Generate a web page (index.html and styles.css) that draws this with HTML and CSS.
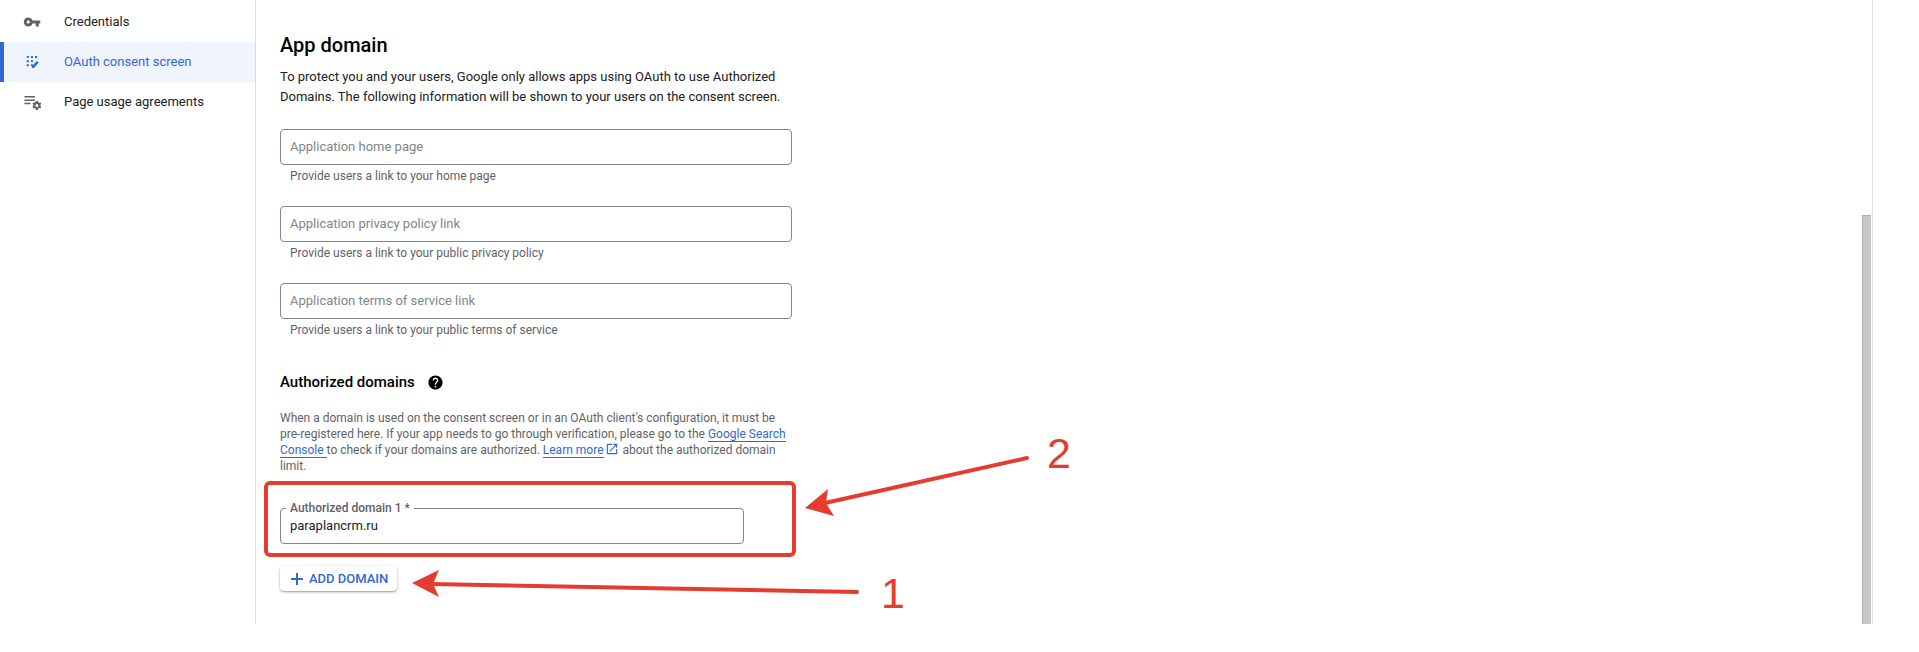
FILE: index.html
```html
<!DOCTYPE html>
<html lang="en">
<head>
    <meta charset="UTF-8">
    <title>OAuth consent screen</title>
    <link rel="stylesheet" href="styles.css">
</head>
<body>
    <div class="page">
        <nav class="sidebar">
            <a class="nav-item">
                <svg class="nav-icon" viewBox="0 0 24 24"><path d="M12.65 10C11.83 7.67 9.61 6 7 6c-3.31 0-6 2.69-6 6s2.69 6 6 6c2.61 0 4.83-1.67 5.65-4H17v4h4v-4h2v-4H12.65zM7 14c-1.1 0-2-.9-2-2s.9-2 2-2 2 .9 2 2-.9 2-2 2z"/></svg>
                Credentials
            </a>
            <a class="nav-item active">
                <svg class="nav-icon" viewBox="0 0 24 24"><path d="M5 4h2.800v2.800H5zM10.500 4h2.800v2.800h-2.800zM16 4h2.800v2.800H16zM5 9.500h2.800v2.800H5zM10.500 9.500h2.800v2.800h-2.800zM5 15h2.800v2.800H5zM10.500 15h2.800v2.800h-2.800zM12 20v-2.500l6.500-7 2.500 2.200-6.500 7.300z"/></svg>
                OAuth consent screen
            </a>
            <a class="nav-item">
                <svg class="nav-icon" viewBox="0 0 24 24"><path d="M2 4h14v2H2zM2 8.500h14v2H2zM2 13h8v2H2z"/><path fill-rule="evenodd" d="M17 10.500h3l.3 1.700 1.200.7 1.600-.6 1.400 2.400-1.300 1.100v1.400l1.300 1.100-1.400 2.400-1.600-.6-1.200.7-.3 1.700h-3l-.3-1.700-1.200-.7-1.600.6-1.400-2.400 1.300-1.100v-1.400l-1.300-1.100 1.400-2.400 1.600.6 1.200-.7zM18.500 14.500a2 2 0 1 0 0 4 2 2 0 0 0 0-4z"/></svg>
                Page usage agreements
            </a>
        </nav>

        <main class="content">
            <h2 class="section-title">App domain</h2>
            <p class="intro">To protect you and your users, Google only allows apps using OAuth to use Authorized Domains. The following information will be shown to your users on the consent screen.</p>

            <div class="field">
                <div class="field-box placeholder">Application home page</div>
                <div class="hint">Provide users a link to your home page</div>
            </div>
            <div class="field">
                <div class="field-box placeholder">Application privacy policy link</div>
                <div class="hint">Provide users a link to your public privacy policy</div>
            </div>
            <div class="field">
                <div class="field-box placeholder">Application terms of service link</div>
                <div class="hint">Provide users a link to your public terms of service</div>
            </div>

            <h3 class="sub-title">
                Authorized domains
                <svg class="help-icon" viewBox="0 0 24 24"><path d="M12 2C6.480 2 2 6.480 2 12s4.480 10 10 10 10-4.480 10-10S17.520 2 12 2zm1 17h-2v-2h2v2zm2.070-7.750l-.9.920C13.450 12.900 13 13.500 13 15h-2v-.5c0-1.100.450-2.100 1.170-2.830l1.240-1.260c.370-.360.590-.860.590-1.410 0-1.100-.9-2-2-2s-2 .9-2 2H8c0-2.210 1.790-4 4-4s4 1.790 4 4c0 .880-.360 1.680-.930 2.250z"/></svg>
            </h3>
            <p class="domain-text">When a domain is used on the consent screen or in an OAuth client's configuration, it must be pre-registered here. If your app needs to go through verification, please go to the <a class="link">Google Search</a> <a class="link">Console </a> to check if your domains are authorized. <a class="link">Learn more</a>
                <svg class="ext-icon" viewBox="0 0 24 24"><path d="M19 19H5V5h7V3H5a2 2 0 0 0-2 2v14a2 2 0 0 0 2 2h14a2 2 0 0 0 2-2v-7h-2v7zM14 3v2h3.600l-9.800 9.800 1.400 1.400L19 6.400V10h2V3h-7z"/></svg>
                about the authorized domain limit.</p>

            <div class="domain-field">
                <span class="domain-label">Authorized domain 1 *</span>
                paraplancrm.ru
            </div>

            <button class="add-btn">
                <svg class="add-icon" viewBox="0 0 12 12"><path d="M5 0h2v5h5v2H7v5H5V7H0V5h5z"/></svg>
                ADD DOMAIN
            </button>
        </main>

        <div class="scrollbar"><div class="thumb"></div></div>
    </div>

    <!-- red annotations drawn over the screenshot -->
    <div class="mark-box"></div>
    <svg class="arrows" viewBox="0 0 1919 652">
        <path class="arrow-line" d="M430 584L857 592"/>
        <path class="arrow-head" d="M412 583L439 570L433 584L439 597z"/>
        <path class="arrow-line" d="M825 503L1027 458"/>
        <path class="arrow-head" d="M805 508L828 489L826 503L834 516z"/>
    </svg>
    <span class="mark-num num-1">1</span>
    <span class="mark-num num-2">2</span>
</body>
</html>
```

FILE: styles.css
```css
html, body {
    margin: 0;
    padding: 0;
    background: #fff;
    overflow: hidden;
}
body {
    font-family: Roboto, "Liberation Sans", sans-serif;
    color: #202124;
    width: 1919px;
    height: 652px;
    position: relative;
}
.page {
    display: flex;
    height: 624px;
    overflow: hidden;
}

/* left nav */
.sidebar {
    box-sizing: border-box;
    width: 256px;
    flex: none;
    padding-top: 2px;
    border-right: 1px solid #dadce0;
}
.nav-item {
    display: flex;
    align-items: center;
    box-sizing: border-box;
    height: 40px;
    padding: 0 0 1px 23px;
    font-size: 13px;
    color: #202124;
}
.nav-icon {
    width: 18px;
    height: 18px;
    margin-right: 23px;
    fill: #5f6368;
}
.nav-item.active {
    background: #f0f4fd;
    color: #3367d6;
    border-left: 4px solid #3367d6;
    padding-left: 19px;
}
.nav-item.active .nav-icon {
    fill: #3367d6;
}

/* main column */
.content {
    flex: 1;
    padding: 31px 0 0 24px;
}
.section-title {
    margin: 0;
    font-size: 20px;
    font-weight: 500;
    line-height: 28px;
    color: #000;
}
.intro {
    width: 520px;
    margin: 8px 0 22px;
    font-size: 13px;
    line-height: 20px;
}
.field {
    width: 512px;
    margin-bottom: 16px;
}
.field-box {
    box-sizing: border-box;
    height: 36px;
    padding: 0 9px;
    line-height: 34px;
    font-size: 13px;
    border: 1px solid #80868b;
    border-radius: 4px;
}
.placeholder {
    color: #80868b;
}
.hint {
    height: 25px;
    padding: 3px 0 0 10px;
    box-sizing: border-box;
    font-size: 12px;
    line-height: 16px;
    color: #5f6368;
}
.sub-title {
    display: flex;
    align-items: center;
    margin: 28px 0 0;
    font-size: 15px;
    font-weight: 500;
    line-height: 20px;
    color: #000;
}
.help-icon {
    width: 17px;
    height: 17px;
    margin-left: 12px;
    fill: #000;
}
.domain-text {
    width: 510px;
    margin: 18px 0 0;
    font-size: 12px;
    line-height: 16px;
    color: #5f6368;
}
.link {
    color: #3367d6;
    border-bottom: 1px solid #3367d6;
}
.ext-icon {
    width: 14px;
    height: 14px;
    margin: 0 1px 0 -2px;
    vertical-align: -2px;
    fill: #3367d6;
}
.domain-field {
    position: relative;
    box-sizing: border-box;
    width: 464px;
    height: 36px;
    margin-top: 34px;
    padding: 7px 9px 0;
    font-size: 13px;
    line-height: 20px;
    border: 1px solid #80868b;
    border-radius: 4px;
}
.domain-label {
    position: absolute;
    left: 5px;
    top: -9px;
    padding: 0 4px;
    background: #fff;
    font-size: 12px;
    font-weight: 500;
    line-height: 16px;
    color: #5f6368;
}
.add-btn {
    display: flex;
    align-items: center;
    box-sizing: border-box;
    width: 117px;
    height: 25px;
    margin-top: 22px;
    padding: 0 0 0 11px;
    border: none;
    border-radius: 4px;
    background: #fff;
    box-shadow: 0 1px 3px rgba(60, 64, 67, .4), 0 1px 1px rgba(60, 64, 67, .2);
    font-family: inherit;
    font-size: 13px;
    font-weight: 500;
    color: #3367d6;
}
.add-icon {
    width: 12px;
    height: 12px;
    margin-right: 6px;
    fill: #3367d6;
}

/* scrollbar at the right edge */
.scrollbar {
    flex: none;
    width: 10px;
    margin-right: 46px;
    border-right: 1px solid #e0e0e0;
    padding-top: 215px;
}
.thumb {
    width: 9px;
    height: 409px;
    background: #c8c8c8;
    border-left: 1px solid #b0b0b0;
    border-top: 1px solid #b0b0b0;
    box-sizing: border-box;
}

/* annotations */
.mark-box {
    position: absolute;
    left: 264px;
    top: 481px;
    width: 532px;
    height: 76px;
    box-sizing: border-box;
    border: 4px solid #e53c30;
    border-radius: 6px;
}
.arrows {
    position: absolute;
    left: 0;
    top: 0;
    width: 1919px;
    height: 652px;
    pointer-events: none;
}
.arrow-line {
    fill: none;
    stroke: #e53c30;
    stroke-width: 4;
    stroke-linecap: round;
}
.arrow-head {
    fill: #e53c30;
}
.mark-num {
    position: absolute;
    font-family: "Liberation Sans", sans-serif;
    font-size: 43px;
    line-height: 50px;
    color: #e53c30;
}
.num-1 {
    left: 881px;
    top: 568px;
}
.num-2 {
    left: 1047px;
    top: 428px;
}
```
